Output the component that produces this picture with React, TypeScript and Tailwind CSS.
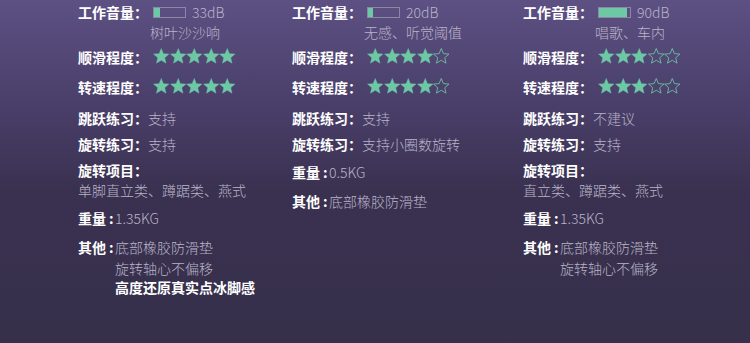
import React from 'react';

const FONT = "font-['Noto_Sans_CJK_SC','Noto_Sans',sans-serif]";

function Star({ filled }: { filled: boolean }): React.ReactElement {
  return (
    <svg viewBox="0 0 24 24" className="h-[16.5px] w-[16.5px] shrink-0">
      <path
        d="M12 0.7L15.12 8.2L23.22 8.85L17.05 14.14L18.94 22.05L12 17.81L5.06 22.05L6.95 14.14L0.78 8.85L8.88 8.2Z"
        fill={filled ? '#6dc9a5' : 'none'}
        stroke="#6dc9a5"
        strokeWidth={filled ? 0.6 : 1.2}
        strokeLinejoin="round"
      />
    </svg>
  );
}

function Stars({ count }: { count: number }): React.ReactElement {
  return (
    <div className="flex items-center">
      {[0, 1, 2, 3, 4].map((i) => (
        <Star key={i} filled={i < count} />
      ))}
    </div>
  );
}

function Volume({ fill, db }: { fill: number; db: string }): React.ReactElement {
  return (
    <div className="flex items-center">
      <div className="flex h-[11px] w-[33px] items-stretch border border-[#8c87a2]">
        <div className="bg-[#6dc9a5]" style={{ width: fill }} />
      </div>
      <span className="ml-[6px] font-light text-[#b9b4c9]">{db}</span>
    </div>
  );
}

function Column({
  fill,
  db,
  sound,
  smooth,
  speed,
  jump,
  spin,
  spinItems,
  weight,
  others,
  bold,
}: {
  fill: number;
  db: string;
  sound: string;
  smooth: number;
  speed: number;
  jump: string;
  spin: string;
  spinItems?: string;
  weight: string;
  others: string[];
  bold?: string;
}): React.ReactElement {
  const label = 'font-bold text-white';
  const value = 'font-light text-[#b9b4c9]';
  return (
    <div className="flex flex-col text-[14px] leading-[20px]">
      <div className="flex h-5 items-center">
        <span className={`${label} w-[75px]`}>工作音量：</span>
        <Volume fill={fill} db={db} />
      </div>
      <div className={`${value} ml-[72px] mt-[-0.5px]`}>{sound}</div>
      <div className="mt-[5px] flex h-5 items-center">
        <span className={`${label} w-[75px]`}>顺滑程度：</span>
        <Stars count={smooth} />
      </div>
      <div className="mt-[10px] flex h-5 items-center">
        <span className={`${label} w-[75px]`}>转速程度：</span>
        <Stars count={speed} />
      </div>
      <div className="mt-[11px] flex h-5 items-center">
        <span className={label}>跳跃练习：</span>
        <span className={value}>{jump}</span>
      </div>
      <div className="mt-[6px] flex h-5 items-center">
        <span className={label}>旋转练习：</span>
        <span className={value}>{spin}</span>
      </div>
      {spinItems && (
        <>
          <div className={`${label} mt-[6px]`}>旋转项目：</div>
          <div className={value}>{spinItems}</div>
        </>
      )}
      <div className="mt-[8px] flex h-5 items-center">
        <span className={label}>重量</span>
        <span className={`${label} inline-block w-[9px] pl-[3px]`}>:</span>
        <span className={value}>{weight}</span>
      </div>
      <div className="mt-[9px] flex">
        <span className={label}>其他</span>
        <span className={`${label} inline-block w-[9px] pl-[3px]`}>:</span>
        <div className="flex flex-col">
          {others.map((o, i) => (
            <span key={o} className={`${value} ${i > 0 ? 'mt-[1px]' : ''}`}>
              {o}
            </span>
          ))}
          {bold && <span className={`${label} mt-[-1px]`}>{bold}</span>}
        </div>
      </div>
    </div>
  );
}

export default function App(): React.ReactElement {
  return (
    <div
      className={`${FONT} h-[343px] w-full overflow-hidden bg-[linear-gradient(180deg,#5d5083_0%,#4a3f6a_30%,#3a3150_56%,#36304b_100%)] pl-[78px] pt-[2px]`}
    >
      <div className="flex">
        <div className="w-[214px] shrink-0">
          <Column
            fill={6}
            db="33dB"
            sound="树叶沙沙响"
            smooth={5}
            speed={5}
            jump="支持"
            spin="支持"
            spinItems="单脚直立类、蹲踞类、燕式"
            weight="1.35KG"
            others={['底部橡胶防滑垫', '旋转轴心不偏移']}
            bold="高度还原真实点冰脚感"
          />
        </div>
        <div className="w-[231px] shrink-0">
          <Column
            fill={5}
            db="20dB"
            sound="无感、听觉阈值"
            smooth={4}
            speed={4}
            jump="支持"
            spin="支持小圈数旋转"
            weight="0.5KG"
            others={['底部橡胶防滑垫']}
          />
        </div>
        <div className="shrink-0">
          <Column
            fill={28}
            db="90dB"
            sound="唱歌、车内"
            smooth={3}
            speed={3}
            jump="不建议"
            spin="支持"
            spinItems="直立类、蹲踞类、燕式"
            weight="1.35KG"
            others={['底部橡胶防滑垫', '旋转轴心不偏移']}
          />
        </div>
      </div>
    </div>
  );
}
